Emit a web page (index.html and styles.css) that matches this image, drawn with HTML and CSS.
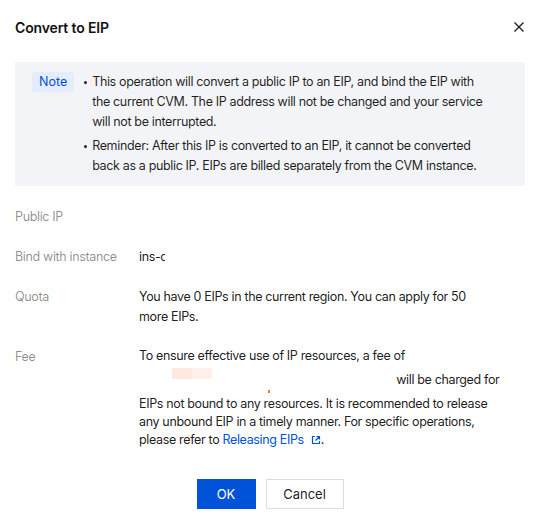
FILE: index.html
```html
<!DOCTYPE html>
<html lang="en">
<head>
<meta charset="utf-8">
<title>Convert to EIP</title>
<link rel="stylesheet" href="styles.css">
</head>
<body>
<div class="dialog">
  <div class="dialog-header">
    <h2 class="dialog-title">Convert to EIP</h2>
    <button class="dialog-close" type="button" aria-label="Close">
      <svg width="12" height="12" viewBox="0 0 12 12"><path d="M1.5 1.5l9 9M10.5 1.5l-9 9" stroke="#1f1f1f" stroke-width="1.4" fill="none"/></svg>
    </button>
  </div>

  <div class="notice">
    <span class="notice-tag">Note</span>
    <ul class="notice-list">
      <li>This operation will convert a public IP to an EIP, and bind the EIP with the current CVM. The IP address will not be changed and your service will not be interrupted.</li>
      <li>Reminder: After this IP is converted to an EIP, it cannot be converted back as a public IP. EIPs are billed separately from the CVM instance.</li>
    </ul>
  </div>

  <div class="form">
    <div class="form-row">
      <div class="form-label">Public IP</div>
      <div class="form-value"></div>
    </div>
    <div class="form-row">
      <div class="form-label">Bind with instance</div>
      <div class="form-value"><span class="instance-id">ins-c</span></div>
    </div>
    <div class="form-row">
      <div class="form-label">Quota</div>
      <div class="form-value"><p class="quota">You have 0 EIPs in the current region. You can apply for 50 more EIPs.</p></div>
    </div>
    <div class="form-row">
      <div class="form-label">Fee</div>
      <div class="form-value fee">To ensure effective use of IP resources, a fee of <span class="price"><span class="price-bar"><span class="price-a"></span><span class="price-b"></span></span><span class="price-dot"></span></span> will be charged for EIPs not bound to any resources. It is recommended to release any unbound EIP in a timely manner. For specific operations, please refer to <a class="link" href="#">Releasing EIPs<svg class="link-icon" width="10" height="10" viewBox="0 0 10 10"><path d="M4 1.5H1.5v7h7V6" stroke="#0052d9" stroke-width="1.2" fill="none"/><path d="M5.5 1.5h3v3M8.5 1.5L4.5 5.5" stroke="#0052d9" stroke-width="1.2" fill="none"/></svg></a>.</div>
    </div>
  </div>

  <div class="dialog-footer">
    <button class="btn btn-primary" type="button">OK</button>
    <button class="btn btn-default" type="button">Cancel</button>
  </div>
</div>
</body>
</html>
```

FILE: styles.css
```css
* { box-sizing: border-box; }

html, body {
  margin: 0;
  padding: 0;
  background: #fff;
}

body {
  font-family: Inter, "Noto Sans", sans-serif;
  font-size: 12.5px;
  letter-spacing: -0.35px;
  color: rgba(0, 0, 0, 0.9);
  -webkit-font-smoothing: antialiased;
}

.dialog {
  width: 543px;
  height: 520px;
  padding: 0 18px 0 15px;
  display: flex;
  flex-direction: column;
}

.dialog > * {
  flex: none;
}

.dialog-header {
  display: flex;
  align-items: center;
  justify-content: space-between;
  height: 54px;
}

.dialog-title {
  margin: 0;
  font-size: 14px;
  font-weight: 600;
  letter-spacing: -0.15px;
  color: #111;
}

.dialog-close {
  border: 0;
  background: none;
  padding: 0;
  width: 12px;
  height: 12px;
  margin-right: 0;
  display: flex;
}

.notice {
  margin-top: 8px;
  background: #f3f4f7;
  padding: 10px 33px 10px 17px;
  display: flex;
  align-items: flex-start;
}

.notice-tag {
  flex: none;
  height: 20px;
  line-height: 20px;
  padding: 0 7px;
  background: #e5ecfd;
  color: #0052d9;
  border-radius: 2px;
  margin-right: 10px;
  letter-spacing: 0;
}

.notice-list {
  margin: 0;
  padding: 0 0 0 8px;
  list-style: none;
  line-height: 20px;
  color: rgba(0, 0, 0, 0.88);
}

.notice-list li {
  position: relative;
}

.notice-list li + li {
  margin-top: 4px;
}

.notice-list li::before {
  content: "";
  position: absolute;
  left: -8px;
  top: 9px;
  width: 3px;
  height: 3px;
  border-radius: 50%;
  background: #222;
}

.form {
  margin-top: 21px;
  display: flex;
  flex-direction: column;
  gap: 20px;
}

.form-row {
  display: flex;
  align-items: flex-start;
}

.form-label {
  flex: none;
  width: 124px;
  line-height: 20px;
  color: rgba(0, 0, 0, 0.45);
}

.form-value {
  flex: 1;
  min-height: 20px;
  line-height: 20px;
  padding-right: 19px;
}

.quota {
  margin: 0;
  max-width: 355px;
}

.instance-id {
  display: inline-block;
  width: 26px;
  overflow: hidden;
  white-space: nowrap;
  vertical-align: top;
}

.fee {
  line-height: 18px;
}

.price {
  display: inline-block;
  position: relative;
  width: 254px;
  height: 30px;
  vertical-align: -11px;
}

.price-bar {
  position: absolute;
  left: 33px;
  top: 3px;
  display: flex;
  height: 11px;
}

.price-a {
  width: 20px;
  background: #fde9df;
}

.price-b {
  width: 20px;
  background: #fef0e8;
}

.price-dot {
  position: absolute;
  left: 129px;
  top: 25px;
  width: 2px;
  height: 3px;
  background: #ff7a26;
}

.link {
  color: #0052d9;
  text-decoration: none;
}

.link-icon {
  margin-left: 7px;
  vertical-align: -1px;
}

.dialog-footer {
  margin-top: 30px;
  display: flex;
  justify-content: center;
  gap: 10px;
}

.btn {
  height: 30px;
  font-family: inherit;
  font-size: 13px;
  letter-spacing: 0;
  border-radius: 0;
  cursor: pointer;
}

.btn-primary {
  width: 59px;
  background: #0052d9;
  border: 1px solid #0052d9;
  color: #fff;
}

.btn-default {
  width: 78px;
  background: #fff;
  border: 1px solid #dcdde3;
  color: rgba(0, 0, 0, 0.9);
}
```
